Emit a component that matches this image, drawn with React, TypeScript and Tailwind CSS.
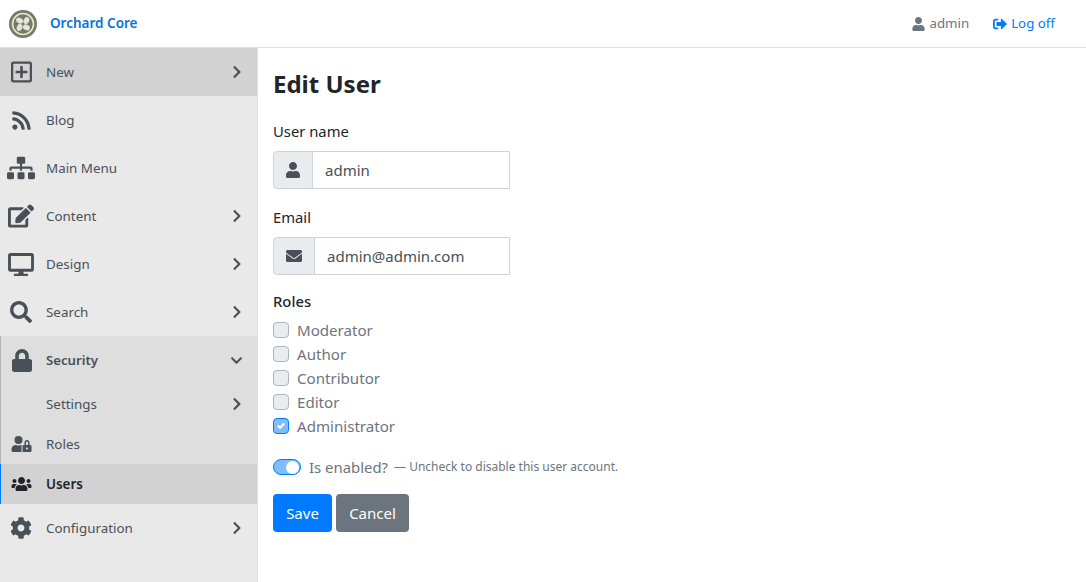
import React from "react";
import {
  FaRegPlusSquare,
  FaRss,
  FaSitemap,
  FaEdit,
  FaDesktop,
  FaSearch,
  FaLock,
  FaUserLock,
  FaUsers,
  FaCog,
  FaChevronRight,
  FaChevronDown,
  FaUser,
  FaEnvelope,
  FaSignOutAlt,
} from "react-icons/fa";

const font = "font-['Noto_Sans',sans-serif]";

const Logo = () => (
  <svg width="28" height="28" viewBox="0 0 28 28">
    <circle cx="14" cy="14" r="14" fill="#777b62" />
    <circle cx="14" cy="14" r="10.5" fill="none" stroke="#e3e4dc" strokeWidth="1.6" />
    <g fill="#e3e4dc">
      <ellipse cx="10.6" cy="10.6" rx="3.6" ry="2.7" transform="rotate(25 10.6 10.6)" />
      <ellipse cx="17.4" cy="10.6" rx="2.7" ry="3.6" transform="rotate(25 17.4 10.6)" />
      <ellipse cx="17.4" cy="17.4" rx="3.6" ry="2.7" transform="rotate(25 17.4 17.4)" />
      <ellipse cx="10.6" cy="17.4" rx="2.7" ry="3.6" transform="rotate(25 10.6 17.4)" />
    </g>
  </svg>
);

interface ItemProps {
  icon: React.ReactNode;
  label: string;
  arrow?: boolean;
  className?: string;
}

const NavItem: React.FC<ItemProps> = ({ icon, label, arrow, className = "" }) => (
  <div className={`flex items-center h-12 pl-[6px] pr-[15px] text-[#495057] ${className}`}>
    <div className="w-[30px] flex justify-center">{icon}</div>
    <span className="ml-[10px] text-[13.4px] leading-[18px] flex-1">{label}</span>
    {arrow && <FaChevronRight className="w-[10px] h-[14px] text-[#495057]" />}
  </div>
);

const SubItem: React.FC<{
  icon?: React.ReactNode;
  label: string;
  arrow?: boolean;
  active?: boolean;
}> = ({ icon, label, arrow, active }) => (
  <div
    className={`flex items-center h-10 pl-[6px] pr-[15px] border-l ${
      active ? "bg-[#d2d2d2] border-[#007bff] text-[#212529] font-semibold" : "border-[#b5b5b5] text-[#495057]"
    }`}
  >
    <div className="w-[29px] flex justify-center">{icon}</div>
    <span className="ml-[10px] text-[13.4px] leading-[18px] flex-1">{label}</span>
    {arrow && <FaChevronRight className="w-[10px] h-[14px] text-[#495057]" />}
  </div>
);

const Role: React.FC<{ label: string; checked?: boolean }> = ({ label, checked }) => (
  <div className="flex items-center h-6 text-[#6c757d]">
    <span
      className={`w-4 h-4 rounded-[4px] border flex items-center justify-center ${
        checked ? "bg-[#80bdff] border-[#007bff]" : "bg-[#e9ecef] border-[#adb5bd]"
      }`}
    >
      {checked && (
        <svg width="8" height="8" viewBox="0 0 8 8">
          <path d="M6.564.75l-3.59 3.612-1.538-1.55L0 4.26l2.974 2.99L8 2.193z" fill="#fff" />
        </svg>
      )}
    </span>
    <span className="ml-2 text-[15.1px]">{label}</span>
  </div>
);

const InputRow: React.FC<{ icon: React.ReactNode; value: string; addon: string }> = ({ icon, value, addon }) => (
  <div className="flex w-[237px] h-[38px]">
    <div
      className={`flex items-center justify-center bg-[#e9ecef] border border-[#ced4da] rounded-l-[4px] ${addon}`}
    >
      {icon}
    </div>
    <div className="flex-1 flex items-center border border-l-0 border-[#ced4da] px-3 pt-px text-[15px] text-[#495057]">
      {value}
    </div>
  </div>
);

export default function App() {
  return (
    <div className={`${font} w-[1086px] h-[582px] overflow-hidden bg-white text-[16px] text-[#212529] flex flex-col`}>
      <header className="h-12 shrink-0 border-b border-[#dfdfdf] flex items-center pl-[9px]">
        <Logo />
        <span className="ml-[13px] text-[#0275d8] text-[13.5px] font-semibold">Orchard Core</span>
        <div className="ml-auto flex items-center text-[13.3px] pr-[31px]">
          <FaUser className="w-[13px] h-[14px] text-[#6c757d]" />
          <span className="ml-1 text-[#6c757d]">admin</span>
          <FaSignOutAlt className="ml-6 w-[14px] h-[14px] text-[#007bff]" />
          <span className="ml-1 text-[#007bff]">Log off</span>
        </div>
      </header>
      <div className="flex flex-1 min-h-0">
        <aside className="w-[258px] shrink-0 bg-[#e9e9e9] border-r border-[#dfdfdf]">
          <NavItem
            className="bg-[#d2d2d2]"
            icon={<FaRegPlusSquare className="w-[21px] h-[24px]" />}
            label="New"
            arrow
          />
          <NavItem icon={<FaRss className="w-[21px] h-[21px]" />} label="Blog" />
          <NavItem icon={<FaSitemap className="w-[28px] h-[24px]" />} label="Main Menu" />
          <NavItem icon={<FaEdit className="w-[26px] h-[24px]" />} label="Content" arrow />
          <NavItem icon={<FaDesktop className="w-[26px] h-[23px]" />} label="Design" arrow />
          <NavItem icon={<FaSearch className="w-[22px] h-[22px]" />} label="Search" arrow />
          <div className="bg-[#dedede]">
            <div className="flex items-center h-12 pl-[6px] pr-[14px] text-[#495057] border-l border-[#b5b5b5]">
              <div className="w-[29px] flex justify-center">
                <FaLock className="w-[20px] h-[23px]" />
              </div>
              <span className="ml-[10px] text-[13.2px] leading-[18px] font-semibold flex-1">Security</span>
              <FaChevronDown className="w-[13px] h-[13px]" />
            </div>
            <SubItem label="Settings" arrow />
            <SubItem icon={<FaUserLock className="w-[21px] h-[16px]" />} label="Roles" />
            <SubItem icon={<FaUsers className="w-[21px] h-[16px] text-[#212529]" />} label="Users" active />
          </div>
          <NavItem icon={<FaCog className="w-[22px] h-[22px]" />} label="Configuration" arrow />
        </aside>
        <main className="flex-1 pl-[15px] pt-[18px]">
          <h1 className="text-[24px] leading-[38px] font-bold -translate-y-px">Edit User</h1>
          <div className="mt-[15px] leading-6 text-[14.8px]">User name</div>
          <div className="mt-2">
            <InputRow addon="w-10" icon={<FaUser className="w-[14px] h-[16px] text-[#495057]" />} value="admin" />
          </div>
          <div className="mt-4 leading-6 text-[14.8px]">Email</div>
          <div className="mt-2">
            <InputRow addon="w-[42px]" icon={<FaEnvelope className="w-4 h-4 text-[#495057]" />} value="admin@admin.com" />
          </div>
          <div className="mt-[14px] leading-6 text-[14.8px] font-medium">Roles</div>
          <div className="mt-[5px]">
            <Role label="Moderator" />
            <Role label="Author" />
            <Role label="Contributor" />
            <Role label="Editor" />
            <Role label="Administrator" checked />
          </div>
          <div className="mt-[17px] h-6 flex items-center text-[#6c757d]">
            <span className="w-7 h-4 rounded-full bg-[#80bdff] border border-[#007bff] flex items-center justify-end pr-px">
              <span className="w-[13px] h-[13px] rounded-full bg-white" />
            </span>
            <span className="ml-2 text-[14.9px]">Is enabled?</span>
            <span className="ml-[6px] text-[12px]">— Uncheck to disable this user account.</span>
          </div>
          <div className="mt-[15px] flex gap-1">
            <button className="h-[38px] w-[59px] rounded-[4px] bg-[#007bff] text-white text-[15px]">Save</button>
            <button className="h-[38px] w-[73px] rounded-[4px] bg-[#6c757d] text-white text-[15px]">Cancel</button>
          </div>
        </main>
      </div>
    </div>
  );
}
